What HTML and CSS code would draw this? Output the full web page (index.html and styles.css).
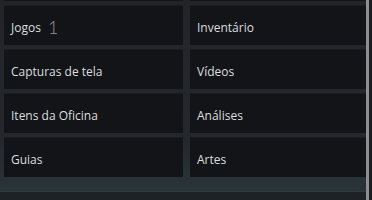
FILE: index.html
```html
<!DOCTYPE html>
<html lang="pt-BR">
<head>
    <meta charset="UTF-8">
    <meta name="viewport" content="width=device-width, initial-scale=1.0">
    <title>Perfil</title>
    <link rel="stylesheet" href="styles.css">
</head>
<body>
    <div class="page">
        <div class="content">
            <div class="links">
                <div class="tile stub"></div>
                <div class="tile stub"></div>

                <a class="tile" href="#">Jogos <span class="count">1</span></a>
                <a class="tile" href="#">Inventário</a>
                <a class="tile" href="#">Capturas de tela</a>
                <a class="tile" href="#">Vídeos</a>
                <a class="tile" href="#">Itens da Oficina</a>
                <a class="tile" href="#">Análises</a>
                <a class="tile" href="#">Guias</a>
                <a class="tile" href="#">Artes</a>
            </div>
            <div class="next-block"></div>
        </div>
        <div class="scrollbar"></div>
        <div class="edge"></div>
    </div>
</body>
</html>
```

FILE: styles.css
```css
html, body {
    margin: 0;
    padding: 0;
    height: 100%;
}

body {
    font-family: "Open Sans", "Noto Sans", Arial, sans-serif;
    background-color: #1e2024;
    overflow: hidden;
}

.page {
    display: flex;
    height: 200px;
}

.content {
    flex: 1;
    display: flex;
    flex-direction: column;
    background: linear-gradient(180deg, #222428 0%, #24282c 70%, #2b373b 100%);
}

.links {
    display: grid;
    grid-template-columns: 179px 1fr;
    grid-template-rows: 3px repeat(4, 40px);
    column-gap: 7px;
    row-gap: 4px;
    padding: 0 0 14px 4px;
    margin-top: -2px;
}

.tile {
    display: flex;
    align-items: center;
    padding: 3px 7px 0;
    background-color: #131418;
    border-top: 1px solid #1b1c20;
    color: #dcdedf;
    font-size: 12px;
    text-decoration: none;
}

.tile.stub {
    padding: 0;
}

.count {
    margin-left: 7px;
    font-family: "Lato", "Open Sans", sans-serif;
    font-weight: 300;
    font-size: 18px;
    color: #8e9196;
}

.next-block {
    flex: 1;
    background-color: #1d2226;
    border-top: 1px solid #2f3a3f;
}

.scrollbar {
    width: 3px;
    background-color: #8c8e93;
}

.edge {
    width: 3px;
    background-color: #1b1c20;
}
```
